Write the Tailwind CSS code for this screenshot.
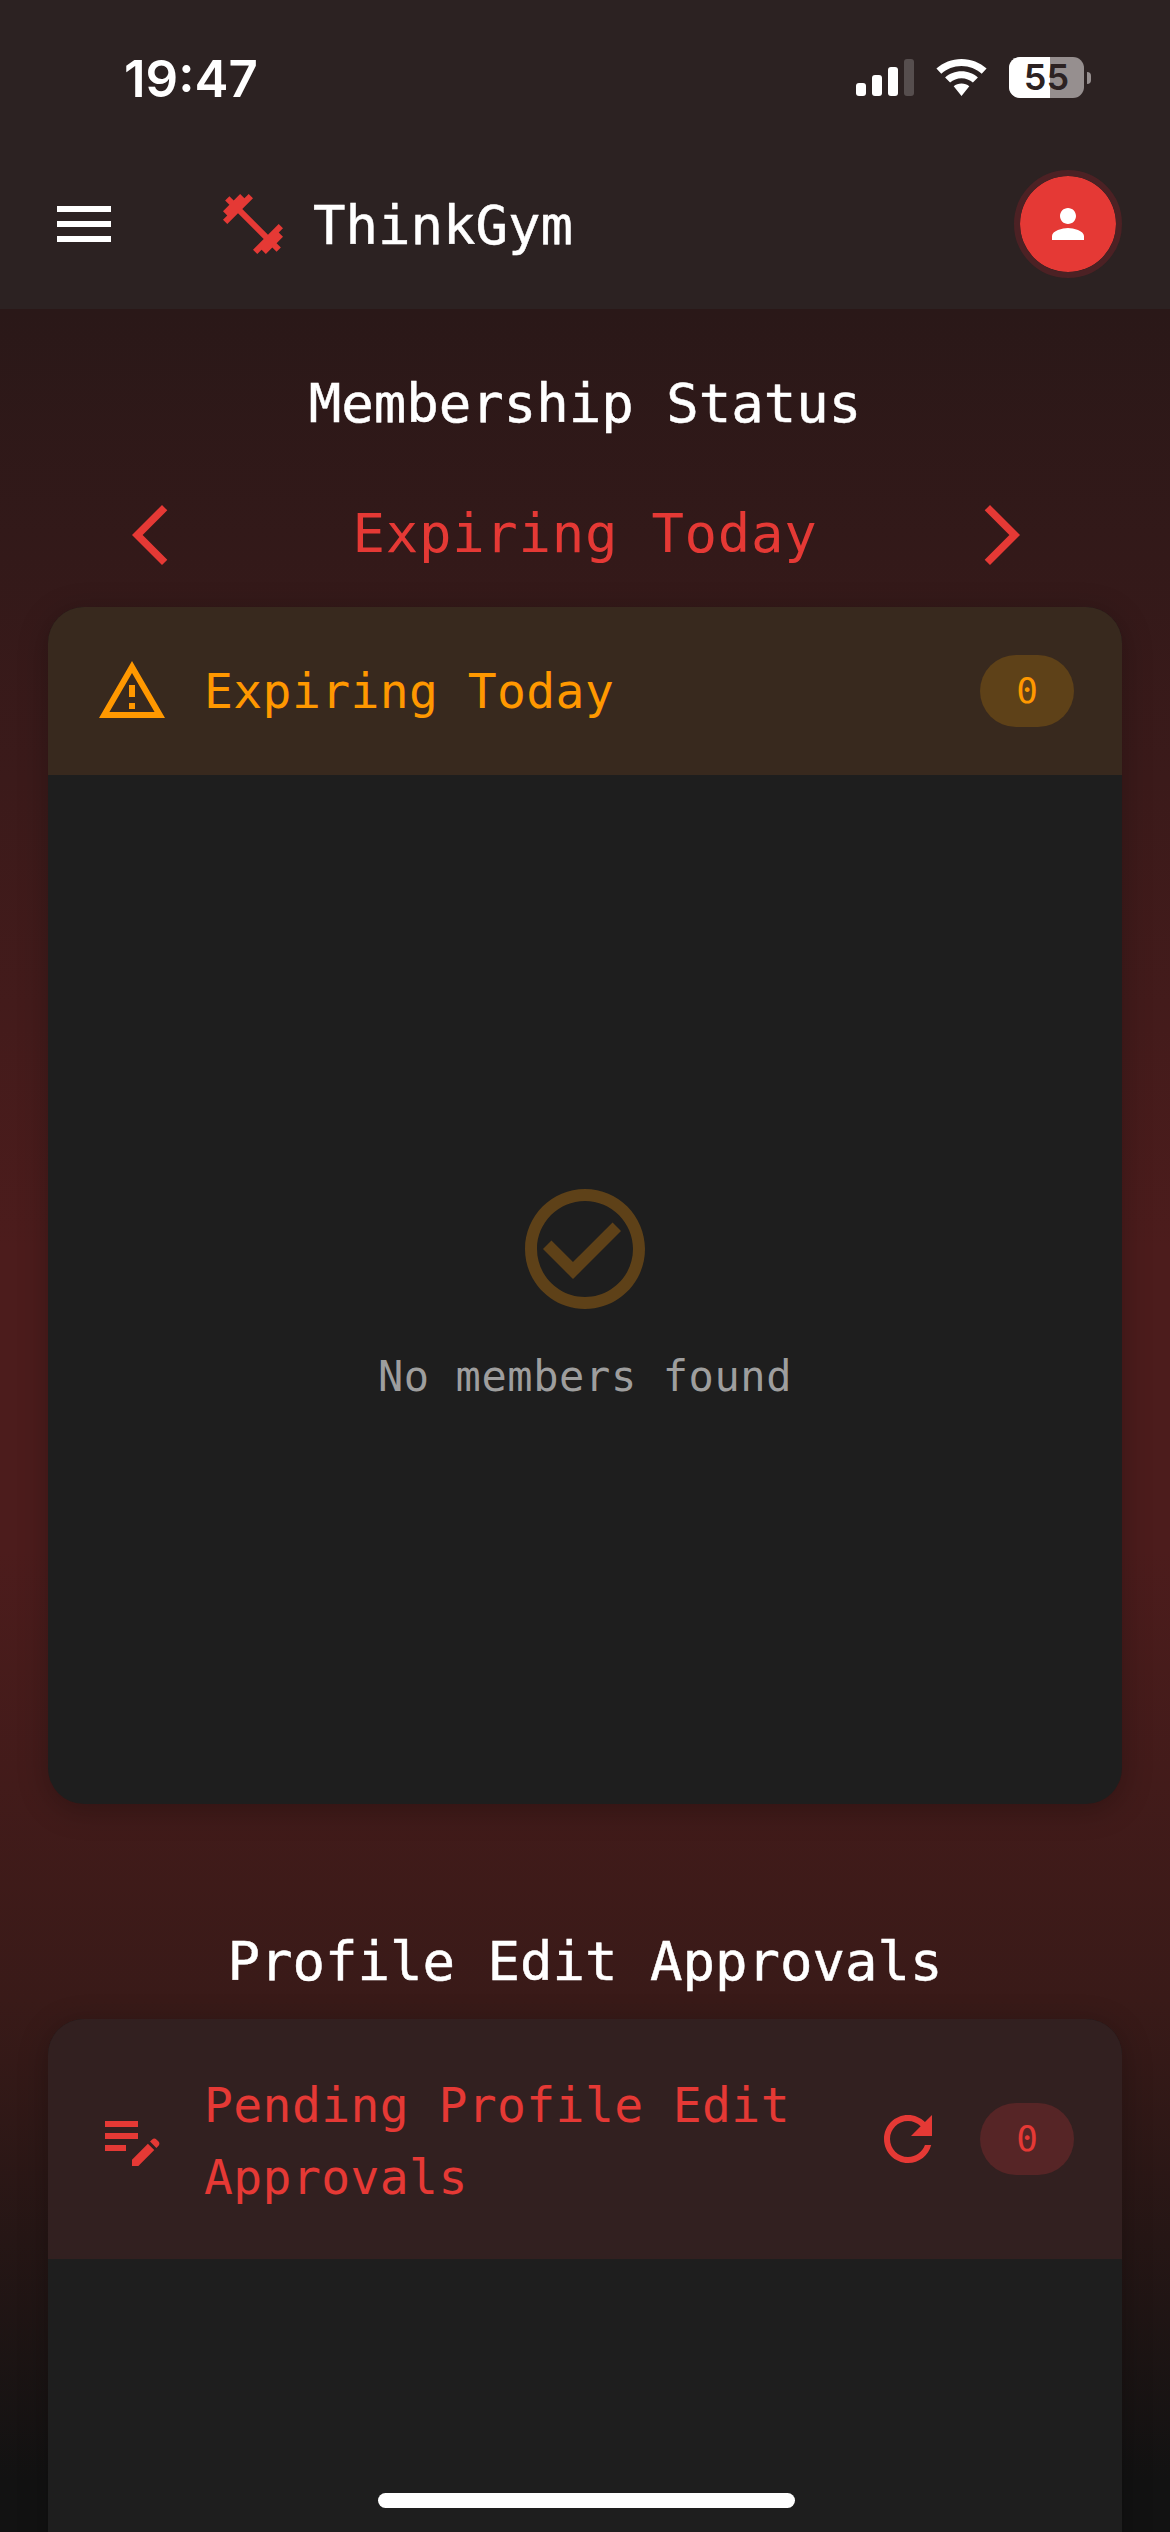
<!DOCTYPE html>
<html lang="en">

<head>
    <meta charset="UTF-8" />
    <meta name="viewport" content="width=device-width, initial-scale=1.0" />
    <title>ThinkGym</title>
    <script src="https://cdn.jsdelivr.net/npm/@tailwindcss/browser@4"></script>
</head>

<body class="bg-[#121212]">
    <div class="relative w-[1170px] h-[2532px] overflow-hidden font-['DejaVu_Sans_Mono',monospace] bg-[linear-gradient(180deg,#2a1818_309px,#4c1c1c_1250px,#4c1c1c_1550px,#391a18_2000px,#121212_2480px)]">

        <!-- status bar + app bar -->
        <header class="bg-[#2c2222] h-[309px] flex flex-col">
            <div class="h-[144px] flex items-start justify-between pl-[124px] pr-[79px] pt-[48px]">
                <span class="font-['Inter',sans-serif] font-semibold text-[51px] leading-[62px] text-white">19:47</span>
                <div class="flex items-center gap-[22px] pt-[9px]">
                    <div class="flex items-end gap-[6px] h-[37px]">
                        <div class="w-[10px] h-[13px] rounded-[3px] bg-white"></div>
                        <div class="w-[10px] h-[21px] rounded-[3px] bg-white"></div>
                        <div class="w-[10px] h-[29px] rounded-[3px] bg-white"></div>
                        <div class="w-[10px] h-[37px] rounded-[3px] bg-white/20"></div>
                    </div>
                    <svg class="w-[51px] h-[37px] fill-white" viewBox="0 0 51 37">
                        <path d="M25.5 0C15.8 0 7.1 3.6 0.4 9.6L5.3 14.7C10.7 10 17.7 7.1 25.5 7.1s14.8 2.9 20.2 7.6l4.9-5.1C43.9 3.6 35.2 0 25.5 0z" />
                        <path d="M25.5 12.2c-6.3 0-12 2.3-16.4 6.2l5 5.1c3.1-2.6 7.1-4.2 11.4-4.2s8.3 1.6 11.4 4.2l5-5.1c-4.4-3.9-10.1-6.2-16.4-6.2z" />
                        <path d="M25.5 24.4c-3 0-5.7 1-7.8 2.8l7.8 9.8 7.8-9.8c-2.1-1.8-4.8-2.8-7.8-2.8z" />
                    </svg>
                    <div class="flex items-center gap-[3px]">
                        <div class="relative w-[75px] h-[41px] rounded-[11px] bg-[#968f8f] flex items-center justify-center">
                            <div class="absolute left-0 top-0 bottom-0 w-[41px] rounded-l-[11px] bg-white"></div>
                            <span class="relative font-['Inter',sans-serif] font-semibold text-[36px] leading-[41px] text-[#2c2222]">55</span>
                        </div>
                        <div class="w-[4px] h-[12px] rounded-r-[4px] bg-[#968f8f]"></div>
                    </div>
                </div>
            </div>
            <div class="flex-1 flex items-center px-[48px] pb-[5px]">
                <svg class="w-[72px] h-[72px] fill-white" viewBox="0 0 24 24"><path d="M3 18h18v-2H3v2zm0-5h18v-2H3v2zm0-7v2h18V6H3z" /></svg>
                <svg class="w-[72px] h-[72px] fill-[#e53935] ml-[97px]" viewBox="0 0 24 24"><path d="M20.57 14.86L22 13.43 20.57 12 17 15.57 8.43 7 12 3.43 10.57 2 9.14 3.43 7.71 2 5.57 4.14 4.14 2.71 2.71 4.14l1.43 1.43L2 7.71l1.43 1.43L2 10.57 3.43 12 7 8.43 15.57 17 12 20.57 13.43 22l1.43-1.43L16.29 22l2.14-2.14 1.43 1.43 1.43-1.43-1.43-1.43L22 16.29z" /></svg>
                <span class="ml-[24px] pt-[3px] text-[54px] leading-[81px] text-white [-webkit-text-stroke:0.5px_white]">ThinkGym</span>
                <div class="ml-auto w-[108px] h-[108px] rounded-full border-[6px] border-[#4c2124] bg-[#e53935] bg-clip-padding flex items-center justify-center">
                    <svg class="w-[48px] h-[48px] fill-white" viewBox="0 0 24 24"><path d="M12 12c2.21 0 4-1.79 4-4s-1.79-4-4-4-4 1.79-4 4 1.79 4 4 4zm0 2c-2.67 0-8 1.34-8 4v2h16v-2c0-2.66-5.33-4-8-4z" /></svg>
                </div>
            </div>
        </header>

        <main class="px-[48px] pt-[54px]">
            <h2 class="text-center text-[54px] leading-[81px] text-white [-webkit-text-stroke:0.5px_white]">Membership Status</h2>

            <div class="flex items-center justify-between mt-[31px] mb-[12px] pl-[66px] pr-[84px]">
                <svg class="w-[72px] h-[72px] my-[24px] fill-[#e53935]" viewBox="0 0 24 24"><path d="M17.77 3.77 16 2 6 12l10 10 1.77-1.77L9.54 12z" /></svg>
                <span class="ml-[18px] mb-[3px] text-[54px] leading-[81px] text-[#e53935] tracking-[0.7px]">Expiring Today</span>
                <svg class="w-[72px] h-[72px] my-[24px] fill-[#e53935]" viewBox="0 0 24 24"><path d="M6.23 20.23 8 22l10-10L8 2 6.23 3.77 14.46 12z" /></svg>
            </div>

            <section class="h-[1197px] rounded-[36px] overflow-hidden bg-[#1e1e1e] shadow-[0_6px_30px_rgba(0,0,0,0.25)] flex flex-col">
                <div class="flex items-center gap-[36px] p-[48px] bg-[#38291e]">
                    <svg class="w-[72px] h-[72px] shrink-0 fill-[#ff9800]" viewBox="0 0 24 24"><path d="M12 5.99L19.53 19H4.47L12 5.99M12 2L1 21h22L12 2zm1 14h-2v2h2v-2zm0-6h-2v4h2v-4z" /></svg>
                    <span class="flex-1 text-[48px] leading-[72px] text-[#ff9800] tracking-[0.4px]">Expiring Today</span>
                    <span class="px-[36px] py-[12px] rounded-full bg-[#5e4118] text-[36px] leading-[48px] text-[#ff9800]">0</span>
                </div>
                <div class="flex-1 flex flex-col items-center justify-center gap-[24px] pt-[6px]">
                    <svg class="w-[144px] h-[144px] fill-[#5e4118]" viewBox="0 0 24 24"><path d="M12 2C6.48 2 2 6.48 2 12s4.48 10 10 10 10-4.48 10-10S17.52 2 12 2zm0 18c-4.41 0-8-3.59-8-8s3.59-8 8-8 8 3.59 8 8-3.59 8-8 8zm4.59-12.42L10 14.17l-3.59-3.58L5 12l5 5 8-8z" /></svg>
                    <p class="text-[42px] leading-[63px] text-[#9e9e9e] tracking-[0.6px]">No members found</p>
                </div>
            </section>

            <h2 class="text-center text-[54px] leading-[81px] text-white [-webkit-text-stroke:0.5px_white] mt-[117px] mb-[17px]">Profile Edit Approvals</h2>

            <section class="rounded-[36px] overflow-hidden bg-[#1e1e1e] shadow-[0_6px_30px_rgba(0,0,0,0.25)] h-[600px]">
                <div class="flex items-center gap-[36px] p-[48px] bg-[#322020]">
                    <svg class="w-[72px] h-[72px] shrink-0 fill-[#e53935]" viewBox="0 0 24 24"><path d="M3 10h11v2H3v-2zm0-2h11V6H3v2zm0 8h7v-2H3v2zm15.01-3.13l.71-.71c.39-.39 1.02-.39 1.41 0l.71.71c.39.39.39 1.02 0 1.41l-.71.71-2.12-2.12zm-.71.71l-5.3 5.3V21h2.12l5.3-5.3-2.12-2.12z" /></svg>
                    <span class="flex-1 translate-y-[2px] text-[48px] leading-[72px] text-[#e53935] tracking-[0.4px]">Pending Profile Edit<br />Approvals</span>
                    <svg class="w-[72px] h-[72px] shrink-0 fill-[#e53935]" viewBox="0 0 24 24"><path d="M17.65 6.35C16.2 4.9 14.21 4 12 4c-4.42 0-7.99 3.58-7.99 8s3.57 8 7.99 8c3.73 0 6.84-2.55 7.73-6h-2.08c-.82 2.33-3.04 4-5.65 4-3.31 0-6-2.69-6-6s2.69-6 6-6c1.66 0 3.14.69 4.22 1.78L13 11h7V4l-2.35 2.35z" /></svg>
                    <span class="px-[36px] py-[12px] rounded-full bg-[#562526] text-[36px] leading-[48px] text-[#e53935]">0</span>
                </div>
            </section>
        </main>

        <!-- home indicator sits over the page -->
        <div class="absolute left-[378px] bottom-[24px] w-[417px] h-[15px] rounded-full bg-white"></div>
    </div>
</body>

</html>
